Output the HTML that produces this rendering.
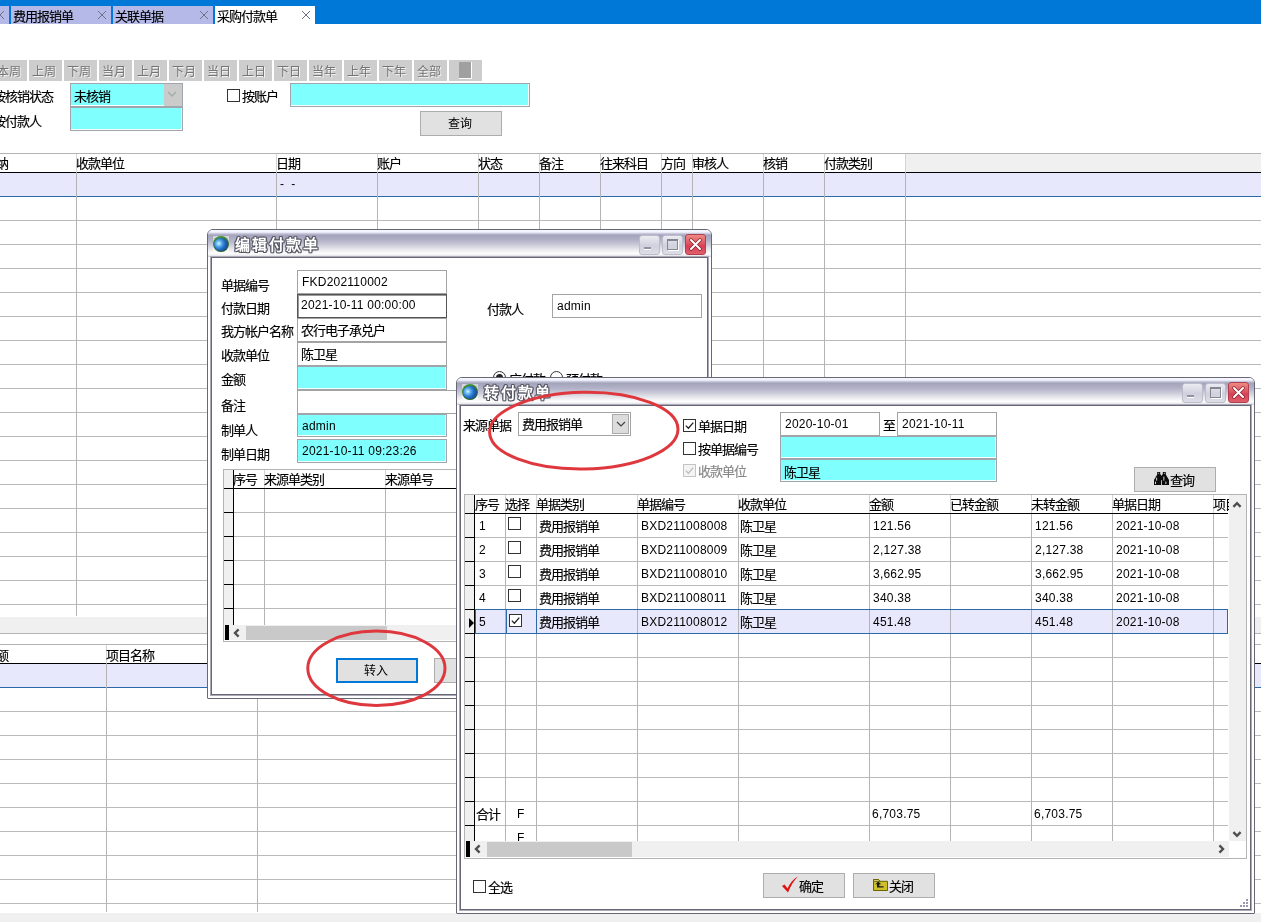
<!DOCTYPE html>
<html lang="zh-CN"><head><meta charset="utf-8"><title>采购付款单</title>
<style>
html,body{margin:0;padding:0;background:#fff;}
body{width:1261px;height:922px;overflow:hidden;position:relative;font-family:"Liberation Sans",sans-serif;font-size:12px;color:#000;}
#root{position:absolute;left:0;top:0;width:1261px;height:922px;overflow:hidden;background:#fff;will-change:transform;}
#root div,#root span,#root svg{position:absolute;box-sizing:border-box;}
.t{white-space:nowrap;height:16px;line-height:16px;font-size:13px;letter-spacing:-1px;-webkit-text-stroke-width:0.15px;}
.n{white-space:nowrap;height:16px;line-height:16px;font-size:12px;letter-spacing:0.22px;}
.tb{background:#cdcdcd;color:#747474;padding-right:3px;text-align:center;line-height:24px;font-size:12px;text-shadow:1px 1px 0 #f4f4f4;white-space:nowrap;overflow:hidden;}
.btn{background:#e1e1e1;border:1px solid #adadad;text-align:center;white-space:nowrap;}
.cy{background:#80ffff;border:1px solid #a0a6ac;box-shadow:inset -1px -1px 0 #f4ffff;}
.wf{background:#fff;border:1px solid #a3a3a3;}
.cb{background:#fff;border:1px solid #333;}
.ttl{white-space:nowrap;font-weight:bold;font-size:15px;letter-spacing:1.9px;color:#fff;height:20px;line-height:20px;
 text-shadow:1px 0 0 #52525f,-1px 0 0 #52525f,0 1px 0 #52525f,0 -1px 0 #52525f,1px 1px 0 #52525f,-1px -1px 0 #6a6a78,1px -1px 0 #6a6a78,-1px 1px 0 #6a6a78;}
.wb{border:1px solid #bcbccb;border-radius:3px;background:linear-gradient(#ebebf2,#d0d0de 55%,#dedee8);}
.wc{border:1px solid #b04050;border-radius:3px;background:linear-gradient(#ee8a84,#dd5560 45%,#d83f55 60%,#e0606a);}
</style></head>
<body>
<div id="root">
<div style="left:0px;top:0px;width:1261px;height:24px;background:#0078d7"></div>
<div style="left:-91px;top:6px;width:100px;height:18px;background:#b5b9e8"></div>
<svg style="left:-5px;top:10px" width="10" height="10" viewBox="0 0 10 10"><path d="M1 1L9 9M9 1L1 9" stroke="#6e6e84" stroke-width="1" fill="none"/></svg>
<div style="left:11px;top:6px;width:100px;height:18px;background:#b5b9e8"></div>
<span class="t" style="left:13px;top:9px;">费用报销单</span>
<svg style="left:97px;top:10px" width="10" height="10" viewBox="0 0 10 10"><path d="M1 1L9 9M9 1L1 9" stroke="#6e6e84" stroke-width="1" fill="none"/></svg>
<div style="left:113px;top:6px;width:100px;height:18px;background:#b5b9e8"></div>
<span class="t" style="left:115px;top:9px;">关联单据</span>
<svg style="left:199px;top:10px" width="10" height="10" viewBox="0 0 10 10"><path d="M1 1L9 9M9 1L1 9" stroke="#6e6e84" stroke-width="1" fill="none"/></svg>
<div style="left:215px;top:6px;width:100px;height:18px;background:#fff"></div>
<span class="t" style="left:217px;top:9px;">采购付款单</span>
<svg style="left:301px;top:10px" width="10" height="10" viewBox="0 0 10 10"><path d="M1 1L9 9M9 1L1 9" stroke="#6e6e84" stroke-width="1" fill="none"/></svg>
<div class="tb" style="left:-6px;top:60px;width:33px;height:21px;">本周</div>
<div class="tb" style="left:29px;top:60px;width:33px;height:21px;">上周</div>
<div class="tb" style="left:64px;top:60px;width:33px;height:21px;">下周</div>
<div class="tb" style="left:99px;top:60px;width:33px;height:21px;">当月</div>
<div class="tb" style="left:134px;top:60px;width:33px;height:21px;">上月</div>
<div class="tb" style="left:169px;top:60px;width:33px;height:21px;">下月</div>
<div class="tb" style="left:204px;top:60px;width:33px;height:21px;">当日</div>
<div class="tb" style="left:239px;top:60px;width:33px;height:21px;">上日</div>
<div class="tb" style="left:274px;top:60px;width:33px;height:21px;">下日</div>
<div class="tb" style="left:309px;top:60px;width:33px;height:21px;">当年</div>
<div class="tb" style="left:344px;top:60px;width:33px;height:21px;">上年</div>
<div class="tb" style="left:379px;top:60px;width:33px;height:21px;">下年</div>
<div class="tb" style="left:414px;top:60px;width:33px;height:21px;">全部</div>
<div class="tb" style="left:449px;top:60px;width:33px;height:21px;"></div>
<div style="left:459px;top:62px;width:13px;height:17px;background:#a0a0a0;border-right:1px solid #fff;border-bottom:1px solid #fff"></div>
<span class="t" style="left:-7px;top:89px;">按核销状态</span>
<span class="t" style="left:-7px;top:114px;">按付款人</span>
<div class="cy" style="left:70px;top:83px;width:113px;height:24px;"></div>
<div style="left:164px;top:84px;width:18px;height:22px;background:#cbcbcb"></div>
<svg style="left:167px;top:91px" width="10" height="7" viewBox="0 0 10 7"><path d="M1 1L5 5L9 1" stroke="#a3aeaa" stroke-width="1.5" fill="none"/></svg>
<span class="t" style="left:74px;top:89px;">未核销</span>
<div class="cy" style="left:70px;top:107px;width:113px;height:24px;"></div>
<div class="cb" style="left:227px;top:89px;width:13px;height:13px;"></div>
<span class="t" style="left:242px;top:89px;">按账户</span>
<div class="cy" style="left:290px;top:83px;width:240px;height:24px;"></div>
<div class="btn" style="left:420px;top:111px;width:82px;height:25px;line-height:25px;padding-right:3px">查询</div>
<div style="left:906px;top:154px;width:355px;height:18px;background:#f0f0f0"></div>
<div style="left:0px;top:173px;width:1261px;height:23px;background:#e8e8fc"></div>
<div style="left:0px;top:153px;width:1261px;height:1px;background:#b4b4b4"></div>
<div style="left:0px;top:172px;width:1261px;height:1px;background:#000"></div>
<div style="left:0px;top:196px;width:1261px;height:1px;background:#2a69aa"></div>
<div style="left:0px;top:220px;width:1261px;height:1px;background:#bababa"></div>
<div style="left:0px;top:244px;width:1261px;height:1px;background:#bababa"></div>
<div style="left:0px;top:268px;width:1261px;height:1px;background:#bababa"></div>
<div style="left:0px;top:292px;width:1261px;height:1px;background:#bababa"></div>
<div style="left:0px;top:316px;width:1261px;height:1px;background:#bababa"></div>
<div style="left:0px;top:340px;width:1261px;height:1px;background:#bababa"></div>
<div style="left:0px;top:364px;width:1261px;height:1px;background:#bababa"></div>
<div style="left:0px;top:388px;width:1261px;height:1px;background:#bababa"></div>
<div style="left:0px;top:412px;width:1261px;height:1px;background:#bababa"></div>
<div style="left:0px;top:436px;width:1261px;height:1px;background:#bababa"></div>
<div style="left:0px;top:460px;width:1261px;height:1px;background:#bababa"></div>
<div style="left:0px;top:484px;width:1261px;height:1px;background:#bababa"></div>
<div style="left:0px;top:508px;width:1261px;height:1px;background:#bababa"></div>
<div style="left:0px;top:532px;width:1261px;height:1px;background:#bababa"></div>
<div style="left:0px;top:556px;width:1261px;height:1px;background:#bababa"></div>
<div style="left:0px;top:580px;width:1261px;height:1px;background:#bababa"></div>
<div style="left:0px;top:604px;width:1261px;height:1px;background:#bababa"></div>
<div style="left:76px;top:153px;width:1px;height:463px;background:#b4b4b4"></div>
<div style="left:276px;top:153px;width:1px;height:463px;background:#b4b4b4"></div>
<div style="left:377px;top:153px;width:1px;height:463px;background:#b4b4b4"></div>
<div style="left:478px;top:153px;width:1px;height:463px;background:#b4b4b4"></div>
<div style="left:539px;top:153px;width:1px;height:463px;background:#b4b4b4"></div>
<div style="left:600px;top:153px;width:1px;height:463px;background:#b4b4b4"></div>
<div style="left:661px;top:153px;width:1px;height:463px;background:#b4b4b4"></div>
<div style="left:692px;top:153px;width:1px;height:463px;background:#b4b4b4"></div>
<div style="left:763px;top:153px;width:1px;height:463px;background:#b4b4b4"></div>
<div style="left:824px;top:153px;width:1px;height:463px;background:#b4b4b4"></div>
<div style="left:905px;top:153px;width:1px;height:463px;background:#b4b4b4"></div>
<div style="left:76px;top:154px;width:1px;height:18px;background:#d4d4d4"></div>
<div style="left:276px;top:154px;width:1px;height:18px;background:#d4d4d4"></div>
<div style="left:377px;top:154px;width:1px;height:18px;background:#d4d4d4"></div>
<div style="left:478px;top:154px;width:1px;height:18px;background:#d4d4d4"></div>
<div style="left:539px;top:154px;width:1px;height:18px;background:#d4d4d4"></div>
<div style="left:600px;top:154px;width:1px;height:18px;background:#d4d4d4"></div>
<div style="left:661px;top:154px;width:1px;height:18px;background:#d4d4d4"></div>
<div style="left:692px;top:154px;width:1px;height:18px;background:#d4d4d4"></div>
<div style="left:763px;top:154px;width:1px;height:18px;background:#d4d4d4"></div>
<div style="left:824px;top:154px;width:1px;height:18px;background:#d4d4d4"></div>
<div style="left:905px;top:154px;width:1px;height:18px;background:#d4d4d4"></div>
<span class="t" style="left:-4px;top:156px;">纳</span>
<span class="t" style="left:76px;top:156px;">收款单位</span>
<span class="t" style="left:276px;top:156px;">日期</span>
<span class="t" style="left:377px;top:156px;">账户</span>
<span class="t" style="left:478px;top:156px;">状态</span>
<span class="t" style="left:539px;top:156px;">备注</span>
<span class="t" style="left:600px;top:156px;">往来科目</span>
<span class="t" style="left:661px;top:156px;">方向</span>
<span class="t" style="left:692px;top:156px;">审核人</span>
<span class="t" style="left:763px;top:156px;">核销</span>
<span class="t" style="left:824px;top:156px;">付款类别</span>
<span class="n" style="left:280px;top:176px;">-&nbsp;&nbsp;-</span>
<div style="left:0px;top:617px;width:1261px;height:16px;background:#f0f0f0"></div>
<div style="left:0px;top:633px;width:1261px;height:1px;background:#b4b4b4"></div>
<div style="left:0px;top:664px;width:1261px;height:23px;background:#e8e8fc"></div>
<div style="left:0px;top:644px;width:1261px;height:1px;background:#b4b4b4"></div>
<div style="left:0px;top:663px;width:1261px;height:1px;background:#000"></div>
<div style="left:0px;top:687px;width:1261px;height:1px;background:#2a69aa"></div>
<div style="left:0px;top:711px;width:1261px;height:1px;background:#bababa"></div>
<div style="left:0px;top:735px;width:1261px;height:1px;background:#bababa"></div>
<div style="left:0px;top:759px;width:1261px;height:1px;background:#bababa"></div>
<div style="left:0px;top:783px;width:1261px;height:1px;background:#bababa"></div>
<div style="left:0px;top:807px;width:1261px;height:1px;background:#bababa"></div>
<div style="left:0px;top:831px;width:1261px;height:1px;background:#bababa"></div>
<div style="left:0px;top:855px;width:1261px;height:1px;background:#bababa"></div>
<div style="left:0px;top:879px;width:1261px;height:1px;background:#bababa"></div>
<div style="left:0px;top:903px;width:1261px;height:1px;background:#bababa"></div>
<div style="left:106px;top:644px;width:1px;height:268px;background:#b4b4b4"></div>
<div style="left:106px;top:645px;width:1px;height:18px;background:#d4d4d4"></div>
<div style="left:257px;top:644px;width:1px;height:268px;background:#b4b4b4"></div>
<div style="left:257px;top:645px;width:1px;height:18px;background:#d4d4d4"></div>
<span class="t" style="left:-4px;top:648px;">额</span>
<span class="t" style="left:106px;top:648px;">项目名称</span>
<div style="left:0px;top:913px;width:1261px;height:9px;background:#f0f0f0"></div>
<div style="left:207px;top:229px;width:505px;height:470px;border:1px solid #676775;border-radius:6px 6px 1px 1px;background:#fff;overflow:hidden"><div style="left:0;top:0;width:100%;height:27px;background:linear-gradient(#f6f6ff 0%,#f3f3fd 8%,#cfcfe2 12%,#a3a3bb 19%,#b1b1c7 37%,#c6c6d6 52%,#dcdce4 65%,#eeeef2 76%,#fdfdfd 87%,#ececf0 94%,#c8c8d2 100%)"></div></div>
<div style="left:211px;top:257px;width:497px;height:438px;border:1px solid #676775;background:#fff;box-shadow:0 0 0 1px #a9a9b8"></div>
<div style="left:213px;top:236px;width:16px;height:16px;background:rgba(255,255,255,.5)"></div>
<div style="left:213px;top:236px;width:16px;height:16px;border-radius:50%;background:linear-gradient(160deg,#4a9a3c 0%,#2f7d2c 45%,#1b5420 100%)"></div>
<div style="left:214px;top:237.5px;width:13.5px;height:13px;border-radius:50%;background:radial-gradient(circle 9px at 34% 42%,#d9f6ff 0%,#8ad0f5 18%,#3b8bdc 48%,#2160b8 75%,#1b4f9e 100%);"></div>
<span class="ttl" style="left:235px;top:235px">编辑付款单</span>
<div class="wb" style="left:639px;top:235px;width:21px;height:20px;"><div style="left:4px;top:11px;width:7px;height:3px;background:#92929e;border-bottom:1px solid #fff"></div></div>
<div class="wb" style="left:662px;top:235px;width:21px;height:20px;"><div style="left:4px;top:3px;width:11px;height:11px;border:1px solid #85858f;border-top-width:2px;box-shadow:1px 1px 0 #fff"></div></div>
<div class="wc" style="left:685px;top:234px;width:21px;height:21px;"><svg style="left:3px;top:3px" width="13" height="13" viewBox="0 0 13 13"><path d="M2 2L11 11M11 2L2 11" stroke="#8a2030" stroke-width="3.4" stroke-linecap="round"/><path d="M2 2L11 11M11 2L2 11" stroke="#fff" stroke-width="2" stroke-linecap="round"/></svg></div>
<div style="left:212px;top:258px;width:496px;height:437px;overflow:hidden">
<span class="t" style="left:9px;top:20px;">单据编号</span>
<div class="wf" style="left:85px;top:12px;width:150px;height:24px;"></div>
<span class="n" style="left:90px;top:16px;">FKD202110002</span>
<span class="t" style="left:9px;top:43px;">付款日期</span>
<div class="wf" style="left:85px;top:36px;width:150px;height:24px;border:1px solid #555;box-shadow:inset 1px 1px 0 #9a9a9a"></div>
<span class="n" style="left:89px;top:39px;">2021-10-11 00:00:00</span>
<span class="t" style="left:9px;top:66px;">我方帐户名称</span>
<div class="wf" style="left:85px;top:60px;width:150px;height:24px;"></div>
<span class="t" style="left:89px;top:65px;">农行电子承兑户</span>
<span class="t" style="left:9px;top:90px;">收款单位</span>
<div class="wf" style="left:85px;top:84px;width:150px;height:24px;"></div>
<span class="t" style="left:89px;top:89px;">陈卫星</span>
<span class="t" style="left:9px;top:114px;">金额</span>
<div class="cy" style="left:85px;top:108px;width:150px;height:24px;"></div>
<span class="t" style="left:9px;top:140px;">备注</span>
<div class="wf" style="left:85px;top:132px;width:405px;height:24px;"></div>
<span class="t" style="left:9px;top:165px;">制单人</span>
<div class="cy" style="left:85px;top:156px;width:150px;height:23px;"></div>
<span class="n" style="left:90px;top:160px;">admin</span>
<span class="t" style="left:9px;top:189px;">制单日期</span>
<div class="cy" style="left:85px;top:181px;width:150px;height:24px;"></div>
<span class="n" style="left:90px;top:185px;">2021-10-11 09:23:26</span>
<span class="t" style="left:275px;top:44px;">付款人</span>
<div class="wf" style="left:340px;top:36px;width:150px;height:24px;"></div>
<span class="n" style="left:345px;top:40px;">admin</span>
<div style="left:281.0px;top:113px;width:13px;height:13px;border:1px solid #333;border-radius:50%;background:#fff"></div>
<span class="t" style="left:297.0px;top:114px;">应付款</span>
<div style="left:337.5px;top:113px;width:13px;height:13px;border:1px solid #333;border-radius:50%;background:#fff"></div>
<span class="t" style="left:353.5px;top:114px;">预付款</span>
<div style="left:284px;top:116px;width:7px;height:7px;border-radius:50%;background:#222"></div>
<div style="left:11px;top:211px;width:485px;height:173px;border:1px solid #b4b4b4;background:#fff"></div>
<div style="left:12px;top:254px;width:483px;height:1px;background:#bababa"></div>
<div style="left:12px;top:278px;width:483px;height:1px;background:#bababa"></div>
<div style="left:12px;top:302px;width:483px;height:1px;background:#bababa"></div>
<div style="left:12px;top:326px;width:483px;height:1px;background:#bababa"></div>
<div style="left:12px;top:350px;width:483px;height:1px;background:#bababa"></div>
<div style="left:52px;top:212px;width:1px;height:155px;background:#b4b4b4"></div>
<div style="left:52px;top:212px;width:1px;height:19px;background:#d4d4d4"></div>
<div style="left:173px;top:212px;width:1px;height:155px;background:#b4b4b4"></div>
<div style="left:173px;top:212px;width:1px;height:19px;background:#d4d4d4"></div>
<div style="left:12px;top:230px;width:483px;height:1px;background:#000"></div>
<div style="left:12px;top:212px;width:9px;height:155px;background:#f0f0f0"></div>
<div style="left:21px;top:212px;width:1px;height:155px;background:#000"></div>
<div style="left:12px;top:230px;width:9px;height:1px;background:#000"></div>
<div style="left:12px;top:254px;width:9px;height:1px;background:#000"></div>
<div style="left:12px;top:278px;width:9px;height:1px;background:#000"></div>
<div style="left:12px;top:302px;width:9px;height:1px;background:#000"></div>
<div style="left:12px;top:326px;width:9px;height:1px;background:#000"></div>
<div style="left:12px;top:350px;width:9px;height:1px;background:#000"></div>
<span class="t" style="left:21px;top:214px;">序号</span>
<span class="t" style="left:52px;top:214px;">来源单类别</span>
<span class="t" style="left:173px;top:214px;">来源单号</span>
<div style="left:12px;top:367px;width:483px;height:15px;background:#f0f0f0"></div>
<div style="left:34px;top:368px;width:141px;height:14px;background:#c9c9c9"></div>
<svg style="left:21px;top:370px" width="8" height="10" viewBox="0 0 8 10"><path d="M5.6 1.4L2 5L5.6 8.6" stroke="#4f4f4f" stroke-width="2.4" fill="none"/></svg>
<div style="left:13px;top:367px;width:4px;height:15px;background:#000"></div>
<div class="btn" style="left:124px;top:400px;width:82px;height:25px;border:2px solid #0078d7;line-height:23px;padding-right:2px">转入</div>
<div class="btn" style="left:222px;top:400px;width:82px;height:25px;line-height:23px"></div>
</div>
<div style="left:456px;top:377px;width:799px;height:537px;border:1px solid #676775;border-radius:6px 6px 1px 1px;background:#fff;overflow:hidden"><div style="left:0;top:0;width:100%;height:27px;background:linear-gradient(#f6f6ff 0%,#f3f3fd 8%,#cfcfe2 12%,#a3a3bb 19%,#b1b1c7 37%,#c6c6d6 52%,#dcdce4 65%,#eeeef2 76%,#fdfdfd 87%,#ececf0 94%,#c8c8d2 100%)"></div></div>
<div style="left:460px;top:405px;width:791px;height:505px;border:1px solid #676775;background:#fff;box-shadow:0 0 0 1px #a9a9b8"></div>
<div style="left:462px;top:384px;width:16px;height:16px;background:rgba(255,255,255,.5)"></div>
<div style="left:462px;top:384px;width:16px;height:16px;border-radius:50%;background:linear-gradient(160deg,#4a9a3c 0%,#2f7d2c 45%,#1b5420 100%)"></div>
<div style="left:463px;top:385.5px;width:13.5px;height:13px;border-radius:50%;background:radial-gradient(circle 9px at 34% 42%,#d9f6ff 0%,#8ad0f5 18%,#3b8bdc 48%,#2160b8 75%,#1b4f9e 100%);"></div>
<span class="ttl" style="left:484px;top:383px">转付款单</span>
<div class="wb" style="left:1182px;top:383px;width:21px;height:20px;"><div style="left:4px;top:11px;width:7px;height:3px;background:#92929e;border-bottom:1px solid #fff"></div></div>
<div class="wb" style="left:1205px;top:383px;width:21px;height:20px;"><div style="left:4px;top:3px;width:11px;height:11px;border:1px solid #85858f;border-top-width:2px;box-shadow:1px 1px 0 #fff"></div></div>
<div class="wc" style="left:1228px;top:382px;width:21px;height:21px;"><svg style="left:3px;top:3px" width="13" height="13" viewBox="0 0 13 13"><path d="M2 2L11 11M11 2L2 11" stroke="#8a2030" stroke-width="3.4" stroke-linecap="round"/><path d="M2 2L11 11M11 2L2 11" stroke="#fff" stroke-width="2" stroke-linecap="round"/></svg></div>
<div style="left:461px;top:406px;width:790px;height:504px;overflow:hidden">
<span class="t" style="left:2px;top:12px;">来源单据</span>
<div class="wf" style="left:57px;top:6px;width:113px;height:24px;"></div>
<div style="left:151px;top:8px;width:17px;height:20px;background:#dcdcdc;border:1px solid #a9a9a9"></div>
<svg style="left:155px;top:15px" width="10" height="7" viewBox="0 0 10 7"><path d="M1 1L5 5L9 1" stroke="#444" stroke-width="1.2" fill="none"/></svg>
<span class="t" style="left:61px;top:11px;">费用报销单</span>
<div class="cb" style="left:222px;top:13px;width:13px;height:13px;"><svg style="left:1px;top:1px" width="9" height="9" viewBox="0 0 9 9"><path d="M0.8 4.6L3.4 7.2L8.3 1.6" stroke="#222" stroke-width="1.3" fill="none"/></svg></div>
<span class="t" style="left:237px;top:13px;">单据日期</span>
<div class="cb" style="left:222px;top:36px;width:13px;height:13px;"></div>
<span class="t" style="left:237px;top:36px;">按单据编号</span>
<div class="cb" style="left:222px;top:58px;width:13px;height:13px;border-color:#c4c4c4;background:#f4f4f4"><svg style="left:1px;top:1px" width="9" height="9" viewBox="0 0 9 9"><path d="M0.8 4.6L3.4 7.2L8.3 1.6" stroke="#bdbdbd" stroke-width="1.3" fill="none"/></svg></div>
<span class="t" style="left:237px;top:58px;color:#868686">收款单位</span>
<div class="wf" style="left:319px;top:6px;width:100px;height:24px;"></div>
<span class="n" style="left:324px;top:10px;">2020-10-01</span>
<span class="t" style="left:422px;top:12px;">至</span>
<div class="wf" style="left:436px;top:6px;width:100px;height:24px;"></div>
<span class="n" style="left:441px;top:10px;">2021-10-11</span>
<div class="cy" style="left:319px;top:30px;width:217px;height:23px;"></div>
<div class="cy" style="left:319px;top:53px;width:217px;height:23px;"></div>
<span class="t" style="left:323px;top:59px;">陈卫星</span>
<div class="btn" style="left:673px;top:61px;width:82px;height:25px;"></div>
<svg style="left:693px;top:66px" width="15" height="13" viewBox="0 0 15 13"><path d="M3.2 0h3v2.2l0.9 0.9v9.9h-7.1v-5l3.2-5.6zM11.8 0h-3v2.2l-0.9 0.9v9.9h7.1v-5l-3.2-5.6z" fill="#0c0c0c"/><rect x="6.5" y="3.6" width="2" height="4.6" fill="#0c0c0c"/><rect x="2.2" y="5.6" width="0.9" height="3" fill="#e8e8e8"/><rect x="1.1" y="9.6" width="0.9" height="2.4" fill="#e8e8e8"/><rect x="9.4" y="4.6" width="0.9" height="4" fill="#e8e8e8"/><rect x="11.4" y="9.6" width="0.9" height="2.4" fill="#e8e8e8"/><rect x="4.3" y="0.8" width="0.8" height="1" fill="#e8e8e8"/><rect x="9.9" y="0.8" width="0.8" height="1" fill="#e8e8e8"/></svg>
<span class="t" style="left:709px;top:67px;">查询</span>
<div style="left:3px;top:88px;width:783px;height:365px;border:1px solid #b4b4b4;background:#fff"></div>
<div style="left:14px;top:203px;width:753px;height:25px;background:#e8e8fc;border:1px solid #2a69aa"></div>
<div style="left:14px;top:131px;width:753px;height:1px;background:#bababa"></div>
<div style="left:14px;top:155px;width:753px;height:1px;background:#bababa"></div>
<div style="left:14px;top:179px;width:753px;height:1px;background:#bababa"></div>
<div style="left:14px;top:251px;width:753px;height:1px;background:#bababa"></div>
<div style="left:14px;top:275px;width:753px;height:1px;background:#bababa"></div>
<div style="left:14px;top:299px;width:753px;height:1px;background:#bababa"></div>
<div style="left:14px;top:323px;width:753px;height:1px;background:#bababa"></div>
<div style="left:14px;top:347px;width:753px;height:1px;background:#bababa"></div>
<div style="left:14px;top:371px;width:753px;height:1px;background:#bababa"></div>
<div style="left:14px;top:395px;width:753px;height:1px;background:#bababa"></div>
<div style="left:14px;top:419px;width:753px;height:1px;background:#bababa"></div>
<div style="left:44px;top:89px;width:1px;height:346px;background:#b4b4b4"></div>
<div style="left:44px;top:89px;width:1px;height:18px;background:#d4d4d4"></div>
<div style="left:75px;top:89px;width:1px;height:346px;background:#b4b4b4"></div>
<div style="left:75px;top:89px;width:1px;height:18px;background:#d4d4d4"></div>
<div style="left:176px;top:89px;width:1px;height:346px;background:#b4b4b4"></div>
<div style="left:176px;top:89px;width:1px;height:18px;background:#d4d4d4"></div>
<div style="left:277px;top:89px;width:1px;height:346px;background:#b4b4b4"></div>
<div style="left:277px;top:89px;width:1px;height:18px;background:#d4d4d4"></div>
<div style="left:408px;top:89px;width:1px;height:346px;background:#b4b4b4"></div>
<div style="left:408px;top:89px;width:1px;height:18px;background:#d4d4d4"></div>
<div style="left:489px;top:89px;width:1px;height:346px;background:#b4b4b4"></div>
<div style="left:489px;top:89px;width:1px;height:18px;background:#d4d4d4"></div>
<div style="left:570px;top:89px;width:1px;height:346px;background:#b4b4b4"></div>
<div style="left:570px;top:89px;width:1px;height:18px;background:#d4d4d4"></div>
<div style="left:651px;top:89px;width:1px;height:346px;background:#b4b4b4"></div>
<div style="left:651px;top:89px;width:1px;height:18px;background:#d4d4d4"></div>
<div style="left:752px;top:89px;width:1px;height:346px;background:#b4b4b4"></div>
<div style="left:752px;top:89px;width:1px;height:18px;background:#d4d4d4"></div>
<div style="left:14px;top:203px;width:753px;height:1px;background:#2a69aa"></div>
<div style="left:14px;top:227px;width:753px;height:1px;background:#2a69aa"></div>
<div style="left:4px;top:107px;width:763px;height:1px;background:#000"></div>
<div style="left:4px;top:89px;width:9px;height:346px;background:#f0f0f0"></div>
<div style="left:13px;top:89px;width:1px;height:346px;background:#000"></div>
<div style="left:4px;top:107px;width:9px;height:1px;background:#000"></div>
<div style="left:4px;top:131px;width:9px;height:1px;background:#000"></div>
<div style="left:4px;top:155px;width:9px;height:1px;background:#000"></div>
<div style="left:4px;top:179px;width:9px;height:1px;background:#000"></div>
<div style="left:4px;top:203px;width:9px;height:1px;background:#000"></div>
<div style="left:4px;top:227px;width:9px;height:1px;background:#000"></div>
<div style="left:4px;top:251px;width:9px;height:1px;background:#000"></div>
<div style="left:4px;top:275px;width:9px;height:1px;background:#000"></div>
<div style="left:4px;top:299px;width:9px;height:1px;background:#000"></div>
<div style="left:4px;top:323px;width:9px;height:1px;background:#000"></div>
<div style="left:4px;top:347px;width:9px;height:1px;background:#000"></div>
<div style="left:4px;top:371px;width:9px;height:1px;background:#000"></div>
<div style="left:4px;top:395px;width:9px;height:1px;background:#000"></div>
<div style="left:4px;top:419px;width:9px;height:1px;background:#000"></div>
<span class="t" style="left:14px;top:91px;">序号</span>
<span class="t" style="left:44px;top:91px;">选择</span>
<span class="t" style="left:75px;top:91px;">单据类别</span>
<span class="t" style="left:176px;top:91px;">单据编号</span>
<span class="t" style="left:277px;top:91px;">收款单位</span>
<span class="t" style="left:408px;top:91px;">金额</span>
<span class="t" style="left:489px;top:91px;">已转金额</span>
<span class="t" style="left:570px;top:91px;">未转金额</span>
<span class="t" style="left:651px;top:91px;">单据日期</span>
<span class="t" style="left:752px;top:91px;">项目</span>
<span class="n" style="left:18px;top:112px;">1</span>
<span class="t" style="left:78px;top:113px;">费用报销单</span>
<span class="n" style="left:180px;top:112px;">BXD211008008</span>
<span class="t" style="left:279px;top:113px;">陈卫星</span>
<span class="n" style="left:412px;top:112px;">121.56</span>
<span class="n" style="left:574px;top:112px;">121.56</span>
<span class="n" style="left:655px;top:112px;">2021-10-08</span>
<div class="cb" style="left:47px;top:111px;width:13px;height:13px;"></div>
<span class="n" style="left:18px;top:136px;">2</span>
<span class="t" style="left:78px;top:137px;">费用报销单</span>
<span class="n" style="left:180px;top:136px;">BXD211008009</span>
<span class="t" style="left:279px;top:137px;">陈卫星</span>
<span class="n" style="left:412px;top:136px;">2,127.38</span>
<span class="n" style="left:574px;top:136px;">2,127.38</span>
<span class="n" style="left:655px;top:136px;">2021-10-08</span>
<div class="cb" style="left:47px;top:135px;width:13px;height:13px;"></div>
<span class="n" style="left:18px;top:160px;">3</span>
<span class="t" style="left:78px;top:161px;">费用报销单</span>
<span class="n" style="left:180px;top:160px;">BXD211008010</span>
<span class="t" style="left:279px;top:161px;">陈卫星</span>
<span class="n" style="left:412px;top:160px;">3,662.95</span>
<span class="n" style="left:574px;top:160px;">3,662.95</span>
<span class="n" style="left:655px;top:160px;">2021-10-08</span>
<div class="cb" style="left:47px;top:159px;width:13px;height:13px;"></div>
<span class="n" style="left:18px;top:184px;">4</span>
<span class="t" style="left:78px;top:185px;">费用报销单</span>
<span class="n" style="left:180px;top:184px;">BXD211008011</span>
<span class="t" style="left:279px;top:185px;">陈卫星</span>
<span class="n" style="left:412px;top:184px;">340.38</span>
<span class="n" style="left:574px;top:184px;">340.38</span>
<span class="n" style="left:655px;top:184px;">2021-10-08</span>
<div class="cb" style="left:47px;top:183px;width:13px;height:13px;"></div>
<span class="n" style="left:18px;top:208px;">5</span>
<span class="t" style="left:78px;top:209px;">费用报销单</span>
<span class="n" style="left:180px;top:208px;">BXD211008012</span>
<span class="t" style="left:279px;top:209px;">陈卫星</span>
<span class="n" style="left:412px;top:208px;">451.48</span>
<span class="n" style="left:574px;top:208px;">451.48</span>
<span class="n" style="left:655px;top:208px;">2021-10-08</span>
<div style="left:45px;top:203px;width:31px;height:25px;border:1px solid #2a69aa"></div>
<div class="cb" style="left:48px;top:208px;width:13px;height:13px;"><svg style="left:1px;top:1px" width="9" height="9" viewBox="0 0 9 9"><path d="M0.8 4.6L3.4 7.2L8.3 1.6" stroke="#222" stroke-width="1.3" fill="none"/></svg></div>
<svg style="left:8px;top:212px" width="5" height="10" viewBox="0 0 5 10"><path d="M0 0L5 5L0 10z" fill="#000"/></svg>
<span class="t" style="left:15px;top:401px;">合计</span>
<span class="n" style="left:56px;top:400px;">F</span>
<span class="n" style="left:56px;top:424px;">F</span>
<span class="n" style="left:411px;top:400px;">6,703.75</span>
<span class="n" style="left:573px;top:400px;">6,703.75</span>
<div style="left:768px;top:89px;width:17px;height:346px;background:#f0f0f0"></div>
<svg style="left:771px;top:95px" width="10" height="8" viewBox="0 0 10 8"><path d="M1.4 5.8L5 2.2L8.6 5.8" stroke="#4f4f4f" stroke-width="2.4" fill="none"/></svg>
<svg style="left:771px;top:424px" width="10" height="8" viewBox="0 0 10 8"><path d="M1.4 2.2L5 5.8L8.6 2.2" stroke="#4f4f4f" stroke-width="2.4" fill="none"/></svg>
<div style="left:4px;top:435px;width:781px;height:17px;background:#fff"></div>
<div style="left:4px;top:435px;width:764px;height:16px;background:#f0f0f0"></div>
<div style="left:26px;top:436px;width:145px;height:15px;background:#c9c9c9"></div>
<svg style="left:13px;top:438px" width="8" height="10" viewBox="0 0 8 10"><path d="M5.6 1.4L2 5L5.6 8.6" stroke="#4f4f4f" stroke-width="2.4" fill="none"/></svg>
<svg style="left:756px;top:438px" width="8" height="10" viewBox="0 0 8 10"><path d="M2.4 1.4L6 5L2.4 8.6" stroke="#4f4f4f" stroke-width="2.4" fill="none"/></svg>
<div style="left:5px;top:435px;width:4px;height:16px;background:#000"></div>
<div class="cb" style="left:12px;top:474px;width:13px;height:13px;"></div>
<span class="t" style="left:27px;top:474px;">全选</span>
<div class="btn" style="left:302px;top:467px;width:82px;height:25px;"></div>
<svg style="left:320px;top:470px" width="18" height="17" viewBox="0 0 18 17"><path d="M1 10L3.5 8.5L6.5 12.5C9 7 12 3.5 17 0.5C12.5 5 9.5 10 7 16.5z" fill="#e01010"/></svg>
<span class="t" style="left:338px;top:473px;">确定</span>
<div class="btn" style="left:392px;top:467px;width:82px;height:25px;"></div>
<svg style="left:412px;top:472px" width="15" height="13" viewBox="0 0 15 13"><path d="M0.5 1.5h5l1.5 1.8h7.5v9.2h-14z" fill="#cfc02a" stroke="#6b6400" stroke-width="1"/><path d="M0.5 1.5h5l1.5 1.8h-6.5z" fill="#ece38a" stroke="#6b6400" stroke-width="1"/><path d="M4 9.6h6.5v-1.4h-4.2v-1.9h1.9l-2.9-2.8l-2.9 2.8h1.6z" fill="#1c1c1c"/></svg>
<span class="t" style="left:428px;top:473px;">关闭</span>
<div style="left:785px;top:493px;width:2px;height:2px;background:#9a9aa8"></div>
<div style="left:782px;top:496px;width:2px;height:2px;background:#9a9aa8"></div>
<div style="left:785px;top:496px;width:2px;height:2px;background:#9a9aa8"></div>
<div style="left:779px;top:499px;width:2px;height:2px;background:#9a9aa8"></div>
<div style="left:782px;top:499px;width:2px;height:2px;background:#9a9aa8"></div>
<div style="left:785px;top:499px;width:2px;height:2px;background:#9a9aa8"></div>
</div>
<svg style="left:0;top:0" width="1261" height="922" viewBox="0 0 1261 922"><ellipse cx="583.8" cy="430.6" rx="94.2" ry="38.3" fill="none" stroke="#de383e" stroke-width="3" transform="rotate(-1 584 430)"/><ellipse cx="376.4" cy="668.3" rx="68.6" ry="37.2" fill="none" stroke="#de383e" stroke-width="3"/></svg>
</div>
</body></html>
